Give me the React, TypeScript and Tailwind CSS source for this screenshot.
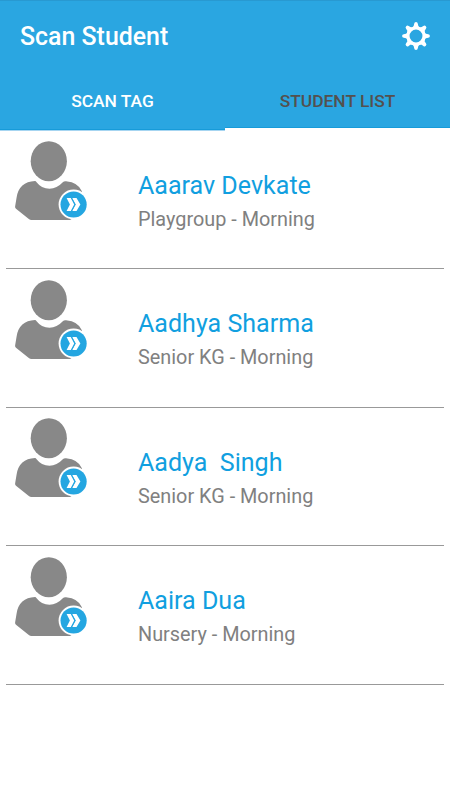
const students = [
  { name: "Aaarav Devkate", group: "Playgroup - Morning" },
  { name: "Aadhya Sharma", group: "Senior KG - Morning" },
  { name: "Aadya  Singh", group: "Senior KG - Morning" },
  { name: "Aaira Dua", group: "Nursery - Morning" },
];

function GearIcon() {
  const teeth = [0, 45, 90, 135, 180, 225, 270, 315];

  return (
    <svg className="h-7 w-7" viewBox="-14 -14 28 28" aria-hidden="true">
      <circle r="8.1" fill="none" stroke="#fff" strokeWidth="3.3" />
      {teeth.map((angle) => (
        <path
          key={angle}
          transform={`rotate(${angle})`}
          d="M-3.6 -8.4 Q-2 -9.6 -1.8 -12.2 Q-1.7 -13.9 0 -13.9 Q1.7 -13.9 1.8 -12.2 Q2 -9.6 3.6 -8.4Z"
          fill="#fff"
        />
      ))}
    </svg>
  );
}

function StudentAvatar() {
  return (
    <svg className="h-[82px] w-[76px] shrink-0" viewBox="14 140 76 82" aria-hidden="true">
      <ellipse cx="48.8" cy="161.2" rx="18.1" ry="20" fill="#888" />
      <path
        d="M35 181.1 Q35.8 181.1 36.6 182.2 Q41.5 188.7 49.5 188.7 Q57 188.7 62.5 182.6 Q64 181.1 66 181.3 Q78.5 182.5 82 191.5 L82 212 L70 220 L31.5 220 Q30 220 28.5 218.8 L16 208.8 Q14.9 208 15.1 206.5 L16.6 197.5 Q19 182 35 181.1Z"
        fill="#888"
      />
      <circle cx="73.6" cy="204.5" r="15" fill="#fff" />
      <circle cx="73.6" cy="204.5" r="13.1" fill="#24a6e1" />
      <path
        d="M66.6 198.1h4.2l3.4 6.4-3.4 6.5h-4.2l3.3-6.5z M72.2 198.1h4.3l3.9 6.4-3.9 6.5h-4.3l3.5-6.5z"
        fill="#fff"
      />
      <path d="M71.6 198.1l3.6 6.4-3.6 6.5" fill="none" stroke="#24a6e1" strokeWidth="0.7" />
    </svg>
  );
}

function Header() {
  return (
    <header className="h-[130px] bg-[linear-gradient(to_bottom,#2899d1_0px,#2899d1_1px,#2aa6e1_1px)] text-white">
      <div className="flex h-[72px] items-center justify-between pr-[20.5px] pl-5">
        <h1 className="pt-px text-[24.9px] font-medium">Scan Student</h1>
        <button aria-label="Settings" className="-mt-px">
          <GearIcon />
        </button>
      </div>
      <nav className="flex h-[58px] text-[17.4px] font-medium">
        <button className="w-[225px] border-b border-[#179bd9] pt-px">SCAN TAG</button>
        <div className="flex w-[225px] border-b-2 border-white">
          <button className="w-full border-b border-[#179bd9] pt-1 text-[#54504e]">STUDENT LIST</button>
        </div>
      </nav>
    </header>
  );
}

export default function App() {
  return (
    <div className="min-h-[800px] w-[450px] bg-white font-[Roboto,sans-serif]">
      <Header />
      <div className="h-px w-[225px] bg-[#a6d5f1]" />
      <ul className="-mt-px px-1.5">
        {students.map((s) => (
          <li
            key={s.name}
            className="group flex h-[139px] border-b border-[#999] pt-2.5 pl-2 even:pt-[9.5px] nth-3:h-[138px] nth-3:pt-[9px]"
          >
            <StudentAvatar />
            <div className="ml-12 pt-[29px] group-even:pt-[28.5px]">
              <div className="text-[25.05px] leading-[34px] whitespace-pre text-[#119fe0]">{s.name}</div>
              <div className="mt-px text-[19.85px] leading-8 whitespace-pre text-[#808080]">{s.group}</div>
            </div>
          </li>
        ))}
      </ul>
    </div>
  );
}
